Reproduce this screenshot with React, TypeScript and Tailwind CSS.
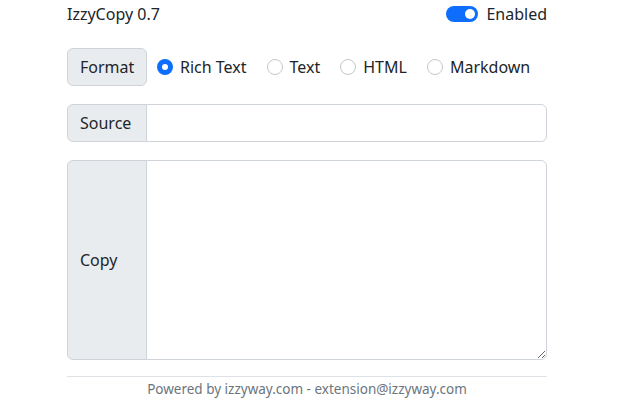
import React from 'react';

export default function App() {
  const formats = ['Rich Text', 'Text', 'HTML', 'Markdown'];

  return (
    <div className="w-[640px] h-[400px] bg-white text-[#212529] text-base" style={{ fontFamily: '"Noto Sans", sans-serif' }}>
      <div className="w-[480px] ml-[67px] pt-[2px]">
        <div className="flex items-center justify-between h-[24px]">
          <span>IzzyCopy 0.7</span>
          <label className="flex items-center gap-2">
            <span className="relative w-[32px] h-[16px] rounded-full bg-[#0d6efd]">
              <span className="absolute right-[3px] top-[3px] w-[10px] h-[10px] rounded-full bg-white" />
            </span>
            <span>Enabled</span>
          </label>
        </div>

        <div className="flex items-center mt-[22px] h-[38px]">
          <div className="flex items-center h-full px-3 bg-[#e9ecef] border border-[#ced4da] rounded-md w-[80px]">
            Format
          </div>
          <div className="flex items-center ml-[10px] gap-[20px]">
            {formats.map((f, i) => (
              <label key={f} className="flex items-center gap-[7px]">
                {i === 0 ? (
                  <span className="w-[16px] h-[16px] rounded-full border-[5px] border-[#0d6efd] bg-white" />
                ) : (
                  <span className="w-[16px] h-[16px] rounded-full border border-[#c3c7cb] bg-white" />
                )}
                <span>{f}</span>
              </label>
            ))}
          </div>
        </div>

        <div className="flex mt-[18px] h-[38px]">
          <div className="flex items-center w-[80px] px-3 bg-[#e9ecef] border border-[#ced4da] rounded-l-md">
            Source
          </div>
          <input className="flex-1 -ml-px border border-[#ced4da] rounded-r-md outline-none px-3" />
        </div>

        <div className="flex mt-[18px] h-[200px]">
          <div className="flex items-center w-[80px] px-3 bg-[#e9ecef] border border-[#ced4da] rounded-l-md">
            Copy
          </div>
          <textarea className="flex-1 -ml-px border border-[#ced4da] rounded-r-md outline-none px-3 py-1.5" />
        </div>

        <div className="mt-[16px] border-t border-[#dee2e6] pt-[2px] text-center text-[13.5px] text-[#6c757d]">
          Powered by izzyway.com - extension@izzyway.com
        </div>
      </div>
    </div>
  );
}
